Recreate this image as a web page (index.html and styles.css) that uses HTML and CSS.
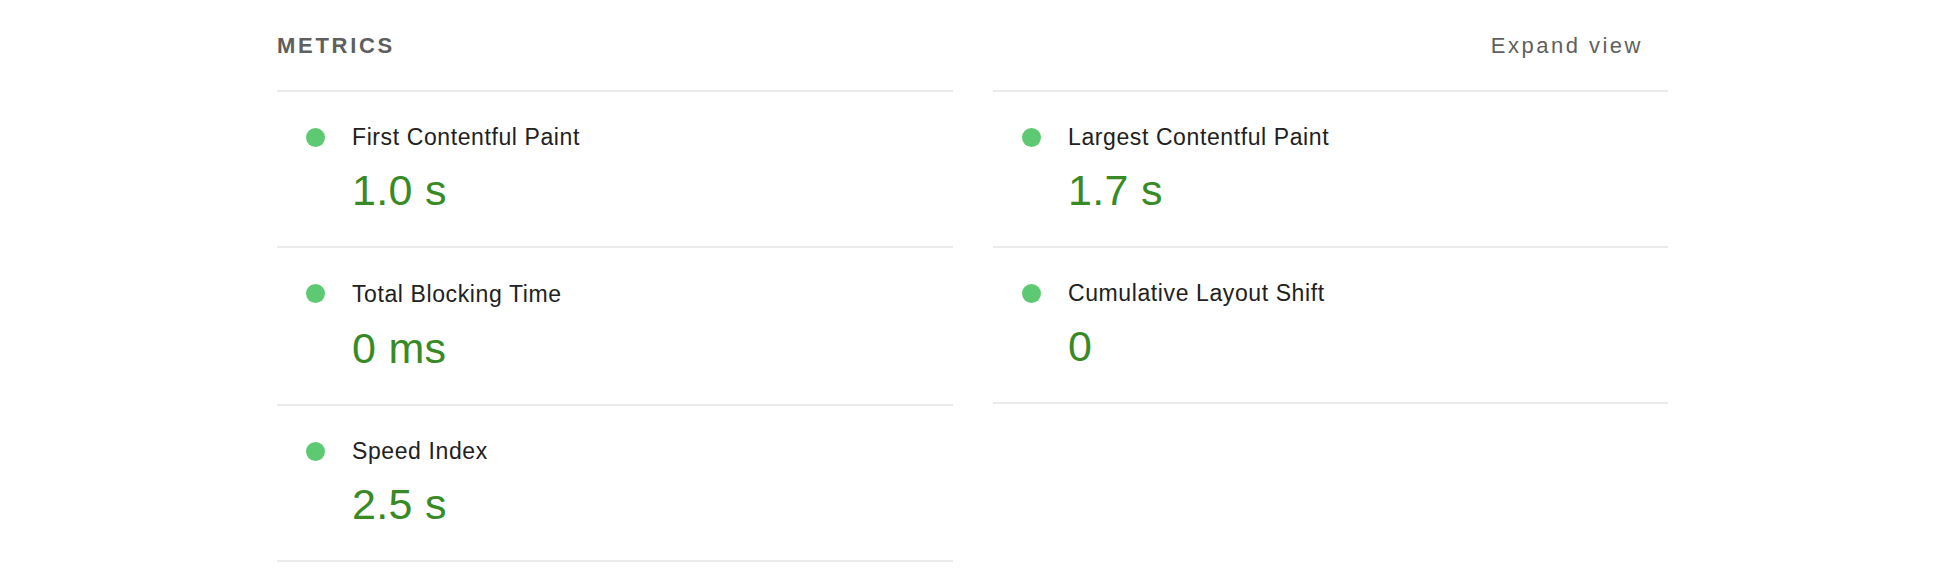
FILE: index.html
```html
<!DOCTYPE html>
<html lang="en">
<head>
<meta charset="utf-8">
<title>Metrics</title>
<link rel="stylesheet" href="styles.css">
</head>
<body>
<section class="metrics">
  <header class="metrics-header">
    <h2 class="metrics-title">Metrics</h2>
    <span class="expand">Expand view</span>
  </header>
  <div class="metrics-grid">
    <div class="metric">
      <span class="dot"></span>
      <div class="metric-title">First Contentful Paint</div>
      <div class="metric-value">1.0&nbsp;s</div>
    </div>
    <div class="metric">
      <span class="dot"></span>
      <div class="metric-title">Largest Contentful Paint</div>
      <div class="metric-value">1.7&nbsp;s</div>
    </div>
    <div class="metric">
      <span class="dot"></span>
      <div class="metric-title">Total Blocking Time</div>
      <div class="metric-value">0&nbsp;ms</div>
    </div>
    <div class="metric">
      <span class="dot"></span>
      <div class="metric-title">Cumulative Layout Shift</div>
      <div class="metric-value">0</div>
    </div>
    <div class="metric">
      <span class="dot"></span>
      <div class="metric-title">Speed Index</div>
      <div class="metric-value">2.5&nbsp;s</div>
    </div>
  </div>
</section>
</body>
</html>
```
FILE: styles.css
```css
html, body {
  margin: 0;
  padding: 0;
  background: #ffffff;
}

body {
  font-family: "Liberation Sans", Arial, Helvetica, sans-serif;
  color: #212121;
}

.metrics {
  width: 1391px;
  margin-left: 277px;
}

.metrics-header {
  display: flex;
  justify-content: space-between;
  align-items: baseline;
  padding: 31px 25px 29px 0;
  height: 30px;
}

.metrics-title {
  margin: 0;
  font-size: 22px;
  line-height: 30px;
  font-weight: bold;
  text-transform: uppercase;
  letter-spacing: 2.7px;
  color: #5f5f5f;
}

.expand {
  font-size: 22px;
  line-height: 30px;
  letter-spacing: 2.5px;
  color: #5f5f5f;
}

.metrics-grid {
  display: grid;
  grid-template-columns: 676px 675px;
  column-gap: 40px;
}

.metric {
  display: grid;
  grid-template-columns: 19px 1fr;
  column-gap: 27px;
  align-items: center;
  padding: 29px 0 30px 29px;
  border-top: 2px solid #ebebeb;
}

.metric:nth-last-child(-n+2) {
  border-bottom: 2px solid #ebebeb;
}

.dot {
  width: 19px;
  height: 19px;
  border-radius: 50%;
  background: #5dc972;
  grid-row: 1;
  grid-column: 1;
}

.metric-title {
  grid-row: 1;
  grid-column: 2;
  font-size: 23px;
  line-height: 32px;
  letter-spacing: 0.6px;
  color: #212121;
}

.metric-value {
  grid-row: 2;
  grid-column: 2;
  margin-top: 11px;
  font-size: 43px;
  line-height: 52px;
  letter-spacing: 0.3px;
  color: #378a25;
}
```
